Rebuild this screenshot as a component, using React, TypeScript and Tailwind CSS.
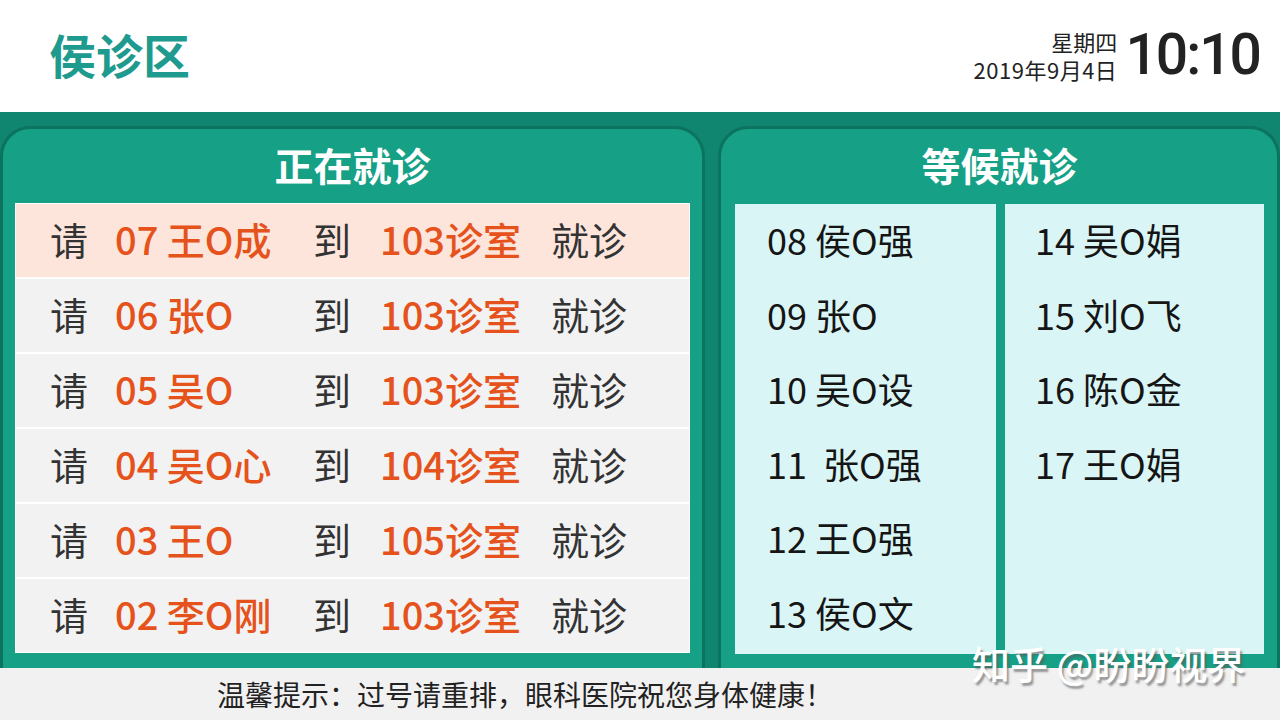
const FONT = "font-['Noto_Sans_CJK_SC','Noto_Sans',sans-serif]";

const CALLING = [
  { no: "07 王O成", room: "103诊室", active: true },
  { no: "06 张O", room: "103诊室" },
  { no: "05 吴O", room: "103诊室" },
  { no: "04 吴O心", room: "104诊室" },
  { no: "03 王O", room: "105诊室" },
  { no: "02 李O刚", room: "103诊室" },
];

const WAITING_A = ["08 侯O强", "09 张O", "10 吴O设", "11  张O强", "12 王O强", "13 侯O文"];
const WAITING_B = ["14 吴O娟", "15 刘O飞", "16 陈O金", "17 王O娟"];

function CallRow({ no, room, active }: { no: string; room: string; active?: boolean }) {
  return (
    <div
      className={`h-[73px] flex items-center pl-[34px] pb-[4px] text-[38px] leading-none ${
        active ? "bg-[#fde5dc]" : "bg-[#f2f2f3]"
      }`}
    >
      <span className="w-[65px] text-[#333]">请</span>
      <span className="w-[198px] text-[#e5521c] font-medium whitespace-pre">{no}</span>
      <span className="w-[67px] text-[#333]">到</span>
      <span className="w-[171px] text-[#e5521c] font-medium">{room}</span>
      <span className="text-[#333]">就诊</span>
    </div>
  );
}

function WaitColumn({ items, pad }: { items: string[]; pad: string }) {
  return (
    <div className={`flex-1 bg-[#daf5f5] flex flex-col pt-[1px] ${pad}`}>
      {items.map((n) => (
        <div key={n} className="h-[74.5px] flex items-center pb-[6px] text-[36px] text-[#151515] whitespace-pre leading-none">
          {n}
        </div>
      ))}
    </div>
  );
}

export default function App() {
  return (
    <div className={`relative w-[1280px] h-[720px] flex flex-col overflow-hidden ${FONT}`}>
      {/* Header */}
      <div className="h-[112px] bg-white flex items-center justify-between pl-[49px] pr-[20px]">
        <h1 className="text-[47px] font-bold text-[#1f9a8f] leading-none pb-[6px]">侯诊区</h1>
        <div className="flex items-center gap-[8px] pb-[3px]">
          <div className="flex flex-col items-end gap-[2px] text-[22px] leading-[26px] text-[#222]">
            <span>星期四</span>
            <span className="tracking-[0.5px]">2019年9月4日</span>
          </div>
          <span className="text-[57px] leading-none tracking-[-2px] text-[#222] font-medium font-['Roboto','Noto_Sans',sans-serif]">10:10</span>
        </div>
      </div>

      {/* Main */}
      <div className="flex-1 bg-[#108670] pt-[14px] flex gap-[13px]">
        {/* Now serving */}
        <div className="w-[705px] rounded-t-[30px] bg-[#16a086] border-[3px] border-b-0 border-[#0c735e] flex flex-col px-[12px] pb-[13px]">
          <div className="h-[74px] flex items-center justify-center pb-[4px] text-[39px] font-bold text-white">正在就诊</div>
          <div className="flex flex-col gap-[2px] bg-white p-[1px]">
            {CALLING.map((r) => (
              <CallRow key={r.no} {...r} />
            ))}
          </div>
        </div>

        {/* Waiting */}
        <div className="flex-1 rounded-t-[30px] bg-[#16a086] border-[3px] border-b-0 border-[#0c735e] flex flex-col pl-[14px] pr-[13px] pb-[14px]">
          <div className="h-[75px] flex items-center justify-center pb-[4px] text-[39px] font-bold text-white">等候就诊</div>
          <div className="flex-1 flex gap-[9px]">
            <WaitColumn items={WAITING_A} pad="pl-[32px]" />
            <WaitColumn items={WAITING_B} pad="pl-[30px]" />
          </div>
        </div>
      </div>

      {/* Footer */}
      <div className="h-[52px] bg-[#f2f1f1] flex items-center pl-[217px] text-[28px] leading-none text-[#222]">
        温馨提示：过号请重排，眼科医院祝您身体健康！
      </div>

      {/* Watermark */}
      <div className="absolute left-[972px] top-[644px] text-[38px] leading-none text-white font-medium [text-shadow:2px_3px_2px_rgba(90,90,90,0.6)]">
        知乎 @盼盼视界
      </div>
    </div>
  );
}
